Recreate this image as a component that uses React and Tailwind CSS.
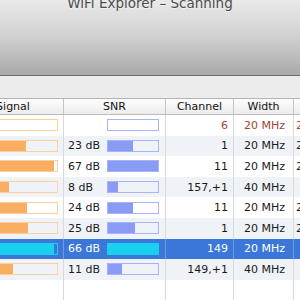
import React from "react";

// rows of the scan table; fills are in px of the bar interior
const rows = [
	{ snr: "", sig: 0, snrFill: 0, ch: "6", width: "20 MHz", band: "2.4 GHz", warn: true },
	{ snr: "23 dB", sig: 58, snrFill: 25, ch: "1", width: "20 MHz", band: "2.4 GHz" },
	{ snr: "67 dB", sig: 86, snrFill: 50, ch: "11", width: "20 MHz", band: "2.4 GHz" },
	{ snr: "8 dB", sig: 41, snrFill: 10, ch: "157,+1", width: "40 MHz", band: "5 GHz" },
	{ snr: "24 dB", sig: 59, snrFill: 25, ch: "11", width: "20 MHz", band: "2.4 GHz" },
	{ snr: "25 dB", sig: 60, snrFill: 27, ch: "1", width: "20 MHz", band: "2.4 GHz" },
	{ snr: "66 dB", sig: 86, snrFill: 50, ch: "149", width: "20 MHz", band: "5 GHz", selected: true },
	{ snr: "11 dB", sig: 45, snrFill: 14, ch: "149,+1", width: "40 MHz", band: "5 GHz" },
];

function Row({ r, i }) {
	const sel = r.selected;
	const bg = sel ? "bg-[#3b77d8]" : i % 2 === 1 ? "bg-[#eff2f7]" : "bg-white";
	const line = sel ? "border-[#7299df]" : "border-[#d9d9d9]";
	const text = sel ? "text-white" : r.warn ? "text-[#a3432f]" : "text-[#1a1a1a]";
	return (
		<div className={`flex h-[20.6px] items-center ${bg} ${text}`}>
			{/* Signal */}
			<div className={`flex h-full w-[101px] shrink-0 items-center border-r ${line} pl-[4px]`}>
				<div
					className={`h-[12px] w-[91px] border ${
						sel ? "border-[#1ccff0]" : "border-[#fccf9c]"
					}`}
				>
					<div
						className={`h-full ${sel ? "bg-[#19d1ef]" : "bg-[#f9ae62]"}`}
						style={{ width: r.sig }}
					/>
				</div>
			</div>
			{/* SNR */}
			<div className={`flex h-full w-[102px] shrink-0 items-center border-r ${line} pl-[4px]`}>
				<span className="w-[39px] shrink-0">{r.snr}</span>
				<div
					className={`h-[12px] w-[52px] border ${
						sel ? "border-[#1ccff0]" : "border-[#a9b3f7]"
					}`}
				>
					<div
						className={`h-full ${sel ? "bg-[#19d1ef]" : "bg-[#8a9bf6]"}`}
						style={{ width: r.snrFill }}
					/>
				</div>
			</div>
			{/* Channel */}
			<div className={`flex h-full w-[68px] shrink-0 items-center justify-end border-r ${line} pr-[5px]`}>
				{r.ch}
			</div>
			{/* Width */}
			<div className={`flex h-full w-[60px] shrink-0 items-center border-r ${line} pl-[10px]`}>
				{r.width}
			</div>
			{/* Band */}
			<div
				className={`flex h-full w-[60px] shrink-0 items-center whitespace-nowrap ${
					r.band === "5 GHz" ? "pl-[12px]" : "pl-[2px]"
				}`}
			>
				{r.band}
			</div>
		</div>
	);
}

export default function App() {
	return (
		<div
			className="relative h-[300px] w-[300px] overflow-hidden bg-white"
			style={{ fontFamily: '"DejaVu Sans", "Liberation Sans", sans-serif' }}
		>
			{/* unified title bar / toolbar */}
			<div className="h-[76px] overflow-hidden border-b border-[#6c6c6c] bg-gradient-to-b from-[#e9e9e9] via-[#d0d0d0] to-[#a9a9a9] text-center">
				<div className="-mt-[3px] text-[13.5px] leading-none text-[#4b4b4b] [text-shadow:0_1px_0_rgba(255,255,255,0.5)]">
					WiFi Explorer – Scanning
				</div>
			</div>
			{/* filter band */}
			<div className="h-[23px] border-b border-[#b3b3b3] bg-[#ececec]" />
			{/* table */}
			<div className="-ml-[37px] text-[11px] leading-none">
				<div className="flex h-[16px] border-b border-[#bdbdbd] bg-gradient-to-b from-[#fdfdfd] to-[#ececec] text-[#111]">
					<div className="flex w-[101px] shrink-0 items-center justify-center border-r border-[#c6c6c6]">Signal</div>
					<div className="flex w-[102px] shrink-0 items-center justify-center border-r border-[#c6c6c6]">SNR</div>
					<div className="flex w-[68px] shrink-0 items-center justify-center border-r border-[#c6c6c6]">Channel</div>
					<div className="flex w-[60px] shrink-0 items-center justify-center border-r border-[#c6c6c6]">Width</div>
					<div className="flex w-[60px] shrink-0 items-center pl-[8px]">Band</div>
				</div>
				{rows.map((r, i) => (
					<Row key={i} r={r} i={i} />
				))}
				{/* empty rows below keep the column lines */}
				<div className="flex h-[40px] bg-white">
					<div className="w-[101px] shrink-0 border-r border-[#d9d9d9]" />
					<div className="w-[102px] shrink-0 border-r border-[#d9d9d9]" />
					<div className="w-[68px] shrink-0 border-r border-[#d9d9d9]" />
					<div className="w-[60px] shrink-0 border-r border-[#d9d9d9]" />
				</div>
			</div>
		</div>
	);
}
